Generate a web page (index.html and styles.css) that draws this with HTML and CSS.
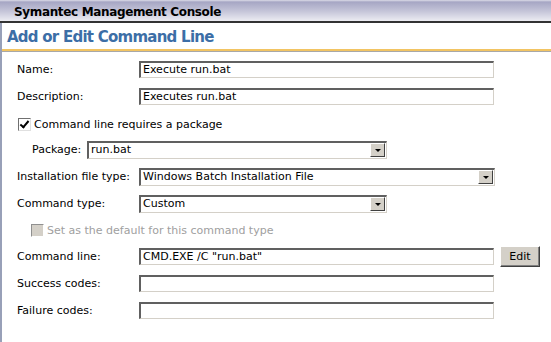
FILE: index.html
```html
<!DOCTYPE html>
<html lang="en">
<head>
    <meta charset="UTF-8">
    <title>Add or Edit Command Line</title>
    <link rel="stylesheet" href="styles.css">
</head>
<body>
    <div class="titlebar">Symantec Management Console</div>
    <div class="panel">
        <h1 class="heading">Add or Edit Command Line</h1>
        <form class="form">
            <div class="row">
                <label class="label">Name:</label>
                <div class="field wide">Execute run.bat</div>
            </div>
            <div class="row">
                <label class="label">Description:</label>
                <div class="field wide">Executes run.bat</div>
            </div>
            <div class="row check-row">
                <span class="check checked"></span>
                <span>Command line requires a package</span>
            </div>
            <div class="row sub-row">
                <label class="sub-label">Package:</label>
                <div class="select pkg"><span class="value">run.bat</span><span class="arrow"></span></div>
            </div>
            <div class="row">
                <label class="label">Installation file type:</label>
                <div class="select wide-select"><span class="value">Windows Batch Installation File</span><span class="arrow"></span></div>
            </div>
            <div class="row">
                <label class="label">Command type:</label>
                <div class="select mid-select"><span class="value">Custom</span><span class="arrow"></span></div>
            </div>
            <div class="row check-row disabled">
                <span class="check"></span>
                <span>Set as the default for this command type</span>
            </div>
            <div class="row">
                <label class="label">Command line:</label>
                <div class="field wide">CMD.EXE /C "run.bat"</div>
                <button type="button" class="btn">Edit</button>
            </div>
            <div class="row">
                <label class="label">Success codes:</label>
                <div class="field wide"></div>
            </div>
            <div class="row">
                <label class="label">Failure codes:</label>
                <div class="field wide"></div>
            </div>
        </form>
    </div>
</body>
</html>
```

FILE: styles.css
```css
html, body { margin: 0; padding: 0; background: #fff; }
body { width: 551px; height: 342px; overflow: hidden; font-family: "DejaVu Sans", Verdana, sans-serif; font-size: 11px; color: #000; }

.titlebar { height: 23px; box-sizing: border-box; padding: 5px 0 0 14px; font-size: 12px; letter-spacing: -0.35px; font-weight: bold; line-height: 15px; background: linear-gradient(#dcdce8 0, #a6a6c4 2px, #c4c4d8 11px, #ececf2 21px); border-bottom: 2px solid #333; }

.panel { border-left: 2px solid #98a0b8; min-height: 319px; }
.heading { margin: 0; height: 28px; padding: 5px 0 0 5px; box-sizing: border-box; font-size: 15px; letter-spacing: -0.75px; line-height: 18px; font-weight: bold; color: #3c6ea6; border-bottom: 2px solid #f2c462; box-shadow: 0 1px 0 #a8a8a8; }

.form { padding: 5px 0 0 15px; }
.row { display: flex; align-items: center; height: 27px; }
.label { width: 122px; flex: none; }
.sub-row { padding-left: 15px; }
.sub-label { width: 55px; flex: none; }

.field { box-sizing: border-box; height: 17px; padding: 0 2px; line-height: 14px; background: #fff; border-style: solid; border-width: 2px 1px 1px 2px; border-color: #606060 #d4d0c8 #d4d0c8 #606060; white-space: nowrap; overflow: hidden; }
.wide { width: 355px; }

.select { box-sizing: border-box; height: 18px; display: flex; align-items: stretch; background: #fff; border-style: solid; border-width: 2px 1px 1px 2px; border-color: #606060 #d4d0c8 #d4d0c8 #606060; }
.select .value { flex: 1; padding-left: 2px; line-height: 14px; white-space: nowrap; overflow: hidden; }
.select .arrow { width: 15px; margin: 0 1px 1px 0; box-sizing: border-box; background: #d4d0c8; border: 1px solid; border-color: #fff #404040 #404040 #fff; position: relative; }
.select .arrow::after { content: ""; position: absolute; left: 4px; top: 5px; border-left: 3px solid transparent; border-right: 3px solid transparent; border-top: 3px solid #000; }
.pkg { width: 300px; }
.wide-select { width: 356px; }
.mid-select { width: 248px; }

.check-row { height: 26px; padding-top: 2px; box-sizing: border-box; }
.check { width: 13px; height: 13px; box-sizing: border-box; margin: 0 3px 0 1px; border-style: solid; border-width: 1px; border-color: #707070 #e0e0e0 #e0e0e0 #707070; background: #fff; position: relative; }
.check.checked::after { content: ""; position: absolute; left: 3px; top: 0px; width: 3px; height: 7px; border: solid #000; border-width: 0 2px 2px 0; transform: rotate(40deg); }
.disabled { padding-left: 13px; padding-top: 0; color: #a0a0a0; }
.disabled .check { background: #d4d0c8; border-color: #909090 #fff #fff #909090; }

.btn { margin-left: 6px; height: 21px; width: 40px; padding: 0; font: inherit; font-size: 11px; background: #d4d0c8; border: 1px solid; border-color: #fff #404040 #404040 #fff; box-shadow: inset -1px -1px 0 #808080; color: #000; }
```
